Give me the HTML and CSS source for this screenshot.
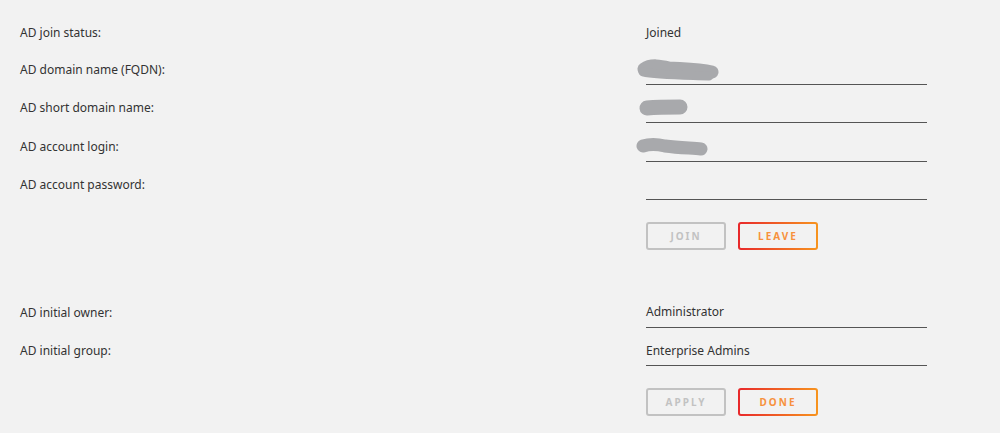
FILE: index.html
```html
<!DOCTYPE html>
<html>
<head>
<meta charset="utf-8">
<title>Active Directory</title>
<link rel="stylesheet" href="styles.css">
</head>
<body>
<div class="ad-form">
  <div class="row row-status">
    <div class="label">AD join status:</div>
    <div class="value">Joined</div>
  </div>
  <div class="row">
    <div class="label">AD domain name (FQDN):</div>
    <div class="field">
      <svg class="mask" width="90" height="26" viewBox="0 0 90 26"><path d="M9 10 C16 5 26 7 34 9 C50 10 64 10 77 13" stroke="#a8a9ac" stroke-width="13" stroke-linecap="round" fill="none"/><path d="M8 13 C20 16 40 16 74 17" stroke="#a8a9ac" stroke-width="9" stroke-linecap="round" fill="none"/></svg>
    </div>
  </div>
  <div class="row">
    <div class="label">AD short domain name:</div>
    <div class="field">
      <svg class="mask mask-short" width="60" height="22" viewBox="0 0 60 22"><path d="M9 11 C20 10 30 10 42 10" stroke="#a8a9ac" stroke-width="15" stroke-linecap="round" fill="none"/></svg>
    </div>
  </div>
  <div class="row">
    <div class="label">AD account login:</div>
    <div class="field">
      <svg class="mask" width="90" height="24" viewBox="0 0 90 24"><path d="M8 10 C14 8 22 8 30 10 C45 12 58 12 66 13" stroke="#a8a9ac" stroke-width="13" stroke-linecap="round" fill="none"/></svg>
    </div>
  </div>
  <div class="row">
    <div class="label">AD account password:</div>
    <div class="field"></div>
  </div>
  <div class="row row-actions">
    <div class="label"></div>
    <div class="actions">
      <button class="btn btn-off">JOIN</button>
      <button class="btn btn-hot">LEAVE</button>
    </div>
  </div>

  <div class="row row-top">
    <div class="label">AD initial owner:</div>
    <div class="field">Administrator</div>
  </div>
  <div class="row">
    <div class="label">AD initial group:</div>
    <div class="field">Enterprise Admins</div>
  </div>
  <div class="row row-actions">
    <div class="label"></div>
    <div class="actions">
      <button class="btn btn-off">APPLY</button>
      <button class="btn btn-hot">DONE</button>
    </div>
  </div>
</div>
</body>
</html>
```

FILE: styles.css
```css
*{margin:0;padding:0;box-sizing:border-box;}
body{background:#f2f2f2;color:#333;font-family:"Noto Sans",Roboto,sans-serif;font-size:12px;}
.ad-form{padding:10px 20px 0 20px;}
.row{display:grid;grid-template-columns:626px 281px;align-items:end;height:38.5px;}
.label{padding-bottom:8px;line-height:14px;}
.row-status{height:36px;}
.row-status .label,.value{padding-bottom:6px;line-height:14px;}
.field{position:relative;height:38.5px;border-bottom:1px solid #555;padding-top:16px;line-height:14px;}
.mask{position:absolute;left:-11px;top:13px;}
.mask-short{left:-8px;top:12px;}
.row-actions{height:50px;}
.row-top{margin-top:39px;}
.actions{display:flex;gap:12px;}
.btn{width:80px;height:28px;font-family:"Noto Sans",Roboto,sans-serif;font-size:10px;font-weight:bold;letter-spacing:2px;border-radius:3px;cursor:pointer;}
.btn-off{background:transparent;border:2px solid #c2c2c2;color:#c2c2c2;}
.btn-hot{border:2px solid transparent;color:#f7913d;
  background:linear-gradient(#f2f2f2,#f2f2f2) padding-box,linear-gradient(90deg,#e8282b,#f7941e) border-box;}
```
